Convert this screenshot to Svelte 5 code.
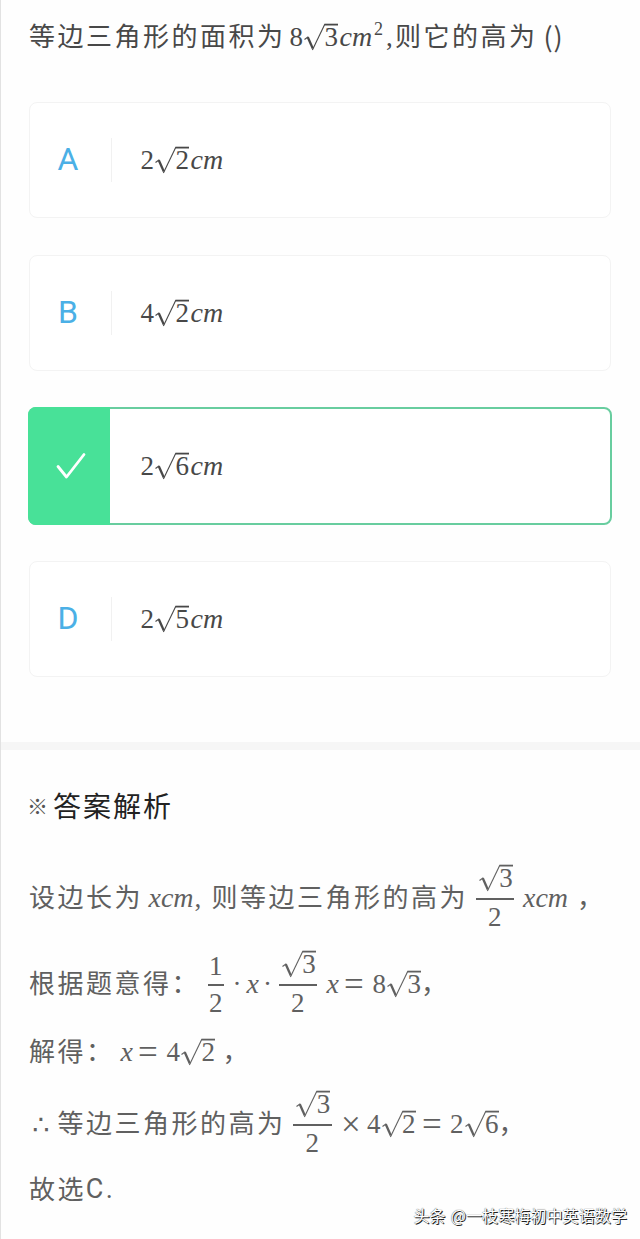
<script>
  const question = [
    { k: 'cn', t: '等边三角形的面积为', w: 260.5 },
    { k: 'num', t: '8', w: 14.5 },
    { k: 'root', t: '3', w: 35.5 },
    { k: 'var', t: 'cm', w: 34.5 },
    { k: 'sup', t: '2', w: 12 },
    { k: 'num', t: ',', w: 9 },
    { k: 'cn', t: '则它的高为', w: 148.5 },
    { k: 'paren', t: '()', w: 24 }
  ];

  const options = [
    { key: 'A', n: '2', root: '2' },
    { key: 'B', n: '4', root: '2' },
    { key: 'C', n: '2', root: '6', correct: true },
    { key: 'D', n: '2', root: '5' }
  ];

  const steps = [
    {
      tall: true,
      gap: 0,
      parts: [
        { k: 'cn', t: '设边长为', w: 119.5 },
        { k: 'var', t: 'xcm', w: 46 },
        { k: 'num', t: ',', w: 17 },
        { k: 'cn', t: '则等边三角形的高为', w: 264 },
        { k: 'frac', root: '3', den: '2', bar: 38.5, w: 47.5 },
        { k: 'var', t: 'xcm', w: 54 },
        { k: 'cn', t: '，', w: 28 }
      ]
    },
    {
      tall: true,
      gap: 14,
      parts: [
        { k: 'cn', t: '根据题意得：', w: 178.5 },
        { k: 'frac', t: '1', den: '2', bar: 16.5, w: 25 },
        { k: 'num', t: '·', w: 14 },
        { k: 'var', t: 'x', w: 16.5 },
        { k: 'num', t: '·', w: 15.5 },
        { k: 'frac', root: '3', den: '2', bar: 38.5, w: 48 },
        { k: 'var', t: 'x', w: 17.5 },
        { k: 'op', t: '=', w: 28.5 },
        { k: 'num', t: '8', w: 14.5 },
        { k: 'root', t: '3', w: 34 },
        { k: 'cn', t: '，', w: 28 }
      ]
    },
    {
      gap: 16,
      parts: [
        { k: 'cn', t: '解得：', w: 91.5 },
        { k: 'var', t: 'x', w: 17.5 },
        { k: 'op', t: '=', w: 28.5 },
        { k: 'num', t: '4', w: 14.5 },
        { k: 'root', t: '2', w: 41.5 },
        { k: 'cn', t: '，', w: 28 }
      ]
    },
    {
      tall: true,
      gap: 20,
      parts: [
        { k: 'there', t: '∴', w: 28.5 },
        { k: 'cn', t: '等边三角形的高为', w: 235.5 },
        { k: 'frac', root: '3', den: '2', bar: 38.5, w: 48 },
        { k: 'op', t: '×', w: 26 },
        { k: 'num', t: '4', w: 14.5 },
        { k: 'root', t: '2', w: 40.5 },
        { k: 'op', t: '=', w: 28 },
        { k: 'num', t: '2', w: 14.5 },
        { k: 'root', t: '6', w: 34 },
        { k: 'cn', t: '，', w: 28 }
      ]
    },
    { gap: 14, parts: [{ k: 'cn', t: '故选', w: 56.7 }, { k: 'latin', t: 'C.', w: 30 }] }
  ];
</script>

{#snippet root(value)}
  <span class="root">
    <svg width="34" height="28" viewBox="0 0 34 28" fill="none" stroke="currentColor">
      <path d="M0.5 16.5 L4.3 13.8" stroke-width="1.1" />
      <path d="M3.8 14.3 L8.8 25.5" stroke-width="2.3" />
      <path d="M8.4 27 L20.8 1.2" stroke-width="1.1" />
      <path d="M20.4 1.6 H34" stroke-width="1.8" />
    </svg>
    <span class="radicand">{value}</span>
  </span>
{/snippet}

{#snippet math(parts)}
  {#each parts as p}
    <span class="cell {p.k}" style="width:{p.w}px">
      {#if p.k === 'root'}
        {@render root(p.t)}
      {:else if p.k === 'frac'}
        <span class="fraction" style="width:{p.bar}px">
          <span class="top">{#if p.root}{@render root(p.root)}{:else}{p.t}{/if}</span>
          <span class="bar"></span>
          <span class="bottom">{p.den}</span>
        </span>
      {:else}{p.t}{/if}
    </span>
  {/each}
{/snippet}

<main>
  <section class="quiz">
    <div class="line question">{@render math(question)}</div>
    <div class="options">
      {#each options as o}
        <div class="option" class:correct={o.correct}>
          <div class="key">
            {#if o.correct}
              <svg width="32" height="30" viewBox="0 0 32 30" fill="none" stroke="#fff" stroke-width="2.8" stroke-linecap="round" stroke-linejoin="round">
                <path d="M3 15.5 L11.5 26 L29 3.5" />
              </svg>
            {:else}{o.key}{/if}
          </div>
          <div class="line answer">
            {@render math([
              { k: 'num', t: o.n, w: 14.5 },
              { k: 'root', t: o.root, w: 35.5 },
              { k: 'var', t: 'cm', w: 34 }
            ])}
          </div>
        </div>
      {/each}
    </div>
  </section>
  <section class="analysis">
    <h2><span class="mark">※</span>答案解析</h2>
    <div class="steps">
      {#each steps as s}
        <div class="line" class:tall={s.tall} style="margin-top:{s.gap}px">{@render math(s.parts)}</div>
      {/each}
    </div>
  </section>
  <div class="credit">头条 @一枝寒梅初中英语数学</div>
</main>

<style>
  :global(body) {
    background: #fefefe;
  }
  main {
    position: relative;
    box-sizing: border-box;
    width: 640px;
    height: 1239px;
    overflow: hidden;
    border-left: 1px solid #e2e2e2;
    background: #fefefe;
    font-family: 'Noto Sans CJK SC', sans-serif;
    color: #484848;
  }
  .quiz {
    box-sizing: border-box;
    height: 750px;
    padding: 18px 28px 0;
    border-bottom: 8px solid #f6f6f6;
  }
  .line {
    display: flex;
    align-items: center;
    height: 32px;
    white-space: nowrap;
  }
  .line.tall {
    height: 72px;
  }
  .question {
    height: 41px;
  }
  .cell {
    display: flex;
    flex: none;
    box-sizing: border-box;
    height: 40px;
    line-height: 40px;
  }
  .cn {
    height: 47px;
    padding-bottom: 7px;
    font-size: 26px;
    letter-spacing: 2.5px;
  }
  .num,
  .var,
  .op,
  .sup {
    height: 43px;
    padding-bottom: 3px;
    font-family: 'Liberation Serif', serif;
    font-size: 27px;
  }
  .var {
    font-size: 28px;
    font-style: italic;
  }
  .op {
    height: 40px;
    padding-bottom: 0;
    font-size: 35px;
  }
  .sup {
    height: 60px;
    padding-bottom: 20px;
    font-size: 18px;
  }
  .paren {
    height: 46px;
    padding-bottom: 6px;
    font-size: 27px;
    letter-spacing: 0.8px;
  }
  .latin {
    height: 44px;
    padding-bottom: 4px;
    font-family: Roboto, sans-serif;
    font-size: 27px;
    letter-spacing: 2.5px;
  }
  .there {
    padding-left: 3.5px;
    font-family: 'DejaVu Sans', sans-serif;
    font-size: 27px;
  }
  .cell.root {
    height: 43px;
    padding-bottom: 3px;
    align-items: center;
  }
  span.root {
    display: inline-grid;
    width: 34px;
    height: 40px;
    line-height: 40px;
    font-family: 'Liberation Serif', serif;
    font-size: 27px;
  }
  .root svg {
    grid-area: 1 / 1;
    margin-top: 6px;
  }
  .radicand {
    grid-area: 1 / 1;
    justify-self: end;
  }
  .frac {
    height: 72px;
  }
  .fraction {
    display: grid;
    grid-template-rows: 35px 2px 35px;
    justify-items: center;
    font-family: 'Liberation Serif', serif;
    font-size: 27px;
  }
  .top,
  .bottom {
    display: flex;
    height: 35px;
    line-height: 35px;
  }
  .top .root {
    margin-top: -5px;
    margin-left: 2px;
  }
  .bar {
    width: 100%;
    height: 2px;
    background: currentColor;
  }
  .options {
    display: grid;
    gap: 37px;
    margin-top: 43px;
  }
  .option {
    display: flex;
    box-sizing: border-box;
    width: 582px;
    height: 116px;
    align-items: center;
    border: 1.5px solid #f3f3f3;
    border-radius: 8px;
    background: #fff;
  }
  .key {
    display: flex;
    box-sizing: border-box;
    width: 82px;
    height: 44px;
    padding-right: 5px;
    padding-bottom: 2px;
    align-items: center;
    justify-content: center;
    border-right: 1.5px solid #f1f1f1;
    font-family: Roboto, sans-serif;
    font-size: 32px;
    color: #4bb0e6;
  }
  .answer {
    margin-left: 28.5px;
    padding-top: 3px;
  }
  .correct {
    width: 584px;
    height: 118px;
    margin: -1px;
    border: 2px solid #68cd9f;
  }
  .correct .key {
    width: 82px;
    height: 118px;
    margin-left: -2px;
    padding: 0;
    padding-left: 3px;
    border: 0;
    border-radius: 8px 0 0 8px;
    background: #48e198;
  }
  .correct .answer {
    margin-left: 30.5px;
  }
  .analysis {
    padding: 33px 28px 0 28px;
  }
  h2 {
    display: flex;
    align-items: center;
    height: 44px;
    margin: 0;
    font-size: 28px;
    font-weight: 400;
    letter-spacing: 2px;
    line-height: 44px;
    color: #222;
  }
  .mark {
    width: 26px;
    margin-left: -2px;
    font-size: 21px;
    color: #555;
  }
  .steps {
    margin-top: 36px;
    color: #606060;
  }
  .credit {
    position: absolute;
    right: 13px;
    bottom: 12px;
    font-size: 16px;
    line-height: 24px;
    letter-spacing: 0.1px;
    word-spacing: 1.5px;
    white-space: nowrap;
    color: #fff;
    text-shadow: 1px 1px 0 #222, 0 0 1px #222;
  }
</style>
